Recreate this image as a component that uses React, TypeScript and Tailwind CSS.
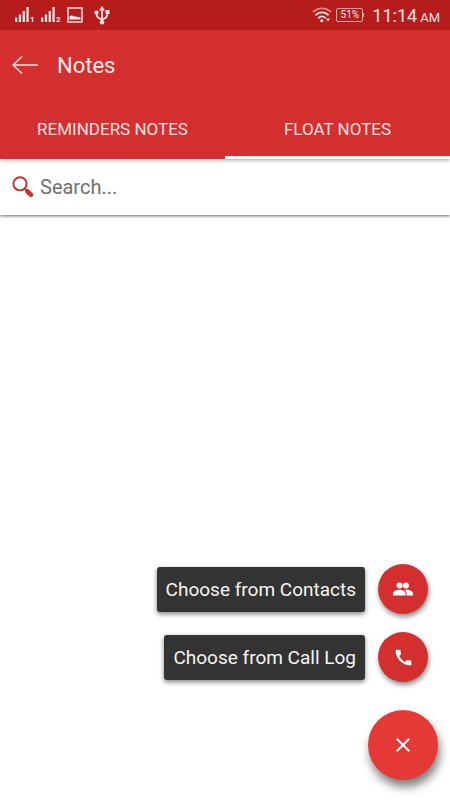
import { MdCall, MdClose } from 'react-icons/md';

const tabs = [
  { id: 'reminders', label: 'REMINDERS NOTES', active: false },
  { id: 'float', label: 'FLOAT NOTES', active: true },
];

const actions = [
  { id: 'contacts', label: 'Choose from Contacts', icon: <PeopleIcon /> },
  { id: 'calls', label: 'Choose from Call Log', icon: <MdCall size={21} /> },
];

function PeopleIcon() {
  return (
    <svg width="22" height="16" viewBox="0 0 22 16" fill="currentColor">
      <circle cx="7.5" cy="4.4" r="3" />
      <circle cx="14" cy="4.4" r="3" />
      <path d="M1 14.500v-1.800c0-2.400 3.600-3.900 6.500-3.900s6 1.500 6 3.900v1.800z" />
      <path d="M14.500 14.500h6.500v-1.800c0-2.400-3.600-3.900-6.700-3.900-.6 0-1.100 0-1.700.2 1.300.8 1.900 2.100 1.900 3.700z" />
    </svg>
  );
}

function SignalIcon({ sim }: { sim: number }) {
  return (
    <div className="flex items-end text-[#fbe3e3]">
      <svg width="15" height="16" viewBox="0 0 15 16" fill="currentColor">
        <rect x="0" y="10.500" width="2.300" height="4.500" />
        <rect x="3.800" y="7.500" width="2.300" height="7.500" />
        <rect x="7.600" y="4" width="2.300" height="11" />
        <rect x="11.400" y="0" width="2.300" height="15" />
      </svg>
      <span className="w-1 text-[8px] leading-[6px] font-bold">{sim}</span>
    </div>
  );
}

function PictureIcon() {
  return (
    <svg width="16" height="16" viewBox="0 0 16 16" fill="none">
      <rect x="1" y="1" width="14" height="14" stroke="#f9dada" strokeWidth="1.500" />
      <path d="M2.500 12.500v-3l2.500-1.200 2 1.500 1.500-.6 1.500 1.100 1.500-.6 2 1.300v1.500z" fill="#fff" />
    </svg>
  );
}

function UsbIcon() {
  return (
    <svg width="16" height="19" viewBox="0 0 16 19" fill="none" stroke="#fbe3e3" strokeWidth="1.800">
      <path d="M8 3v13M8 13.500c-4-1-5.500-2.500-5.500-6M8 13.500c4-1 5.500-2.500 5.500-6" />
      <path d="M8 0l3 4.500H5z" fill="#fbe3e3" stroke="none" />
      <circle cx="2.500" cy="6.500" r="2.100" fill="#fbe3e3" stroke="none" />
      <rect x="11.500" y="4" width="4" height="4" fill="#fbe3e3" stroke="none" />
      <circle cx="8" cy="16.300" r="2.300" fill="#fbe3e3" stroke="none" />
    </svg>
  );
}

function WifiIcon() {
  return (
    <svg width="20" height="16" viewBox="0 0 20 16" fill="none" strokeWidth="1.800" strokeLinecap="round">
      <path d="M1.500 4.500c5-4.300 12-4.300 17 0" stroke="#e38080" />
      <path d="M4 7.700c3.600-3 8.400-3 12 0M6.600 10.700c2-1.600 4.800-1.600 6.600 0" stroke="#fbe3e3" />
      <circle cx="9.800" cy="13.700" r="1.500" fill="#fbe3e3" />
      <path d="M14 11.500h4l-2 3z" fill="#fbe3e3" />
    </svg>
  );
}

function BatteryIcon() {
  return (
    <div className="flex items-center">
      <div className="flex h-[14px] w-[27px] items-center justify-center rounded-xs border border-[#f0a5a5] text-[10px] leading-none text-[#fdeaea]">
        51%
      </div>
      <div className="h-1 w-px bg-[#f0a5a5]" />
    </div>
  );
}

function BackIcon() {
  return (
    <svg width="26" height="20" viewBox="0 0 26 20" fill="none" stroke="#fbe3e3" strokeWidth="1.500">
      <path d="M10 1.500L1 10l9 8.500M1 10h25" />
    </svg>
  );
}

function SearchIcon() {
  return (
    <svg width="22" height="22" viewBox="0 0 22 22" fill="none" stroke="#c9302f">
      <circle cx="8" cy="7.800" r="6.600" strokeWidth="1.900" />
      <path d="M12.500 12.500l3 3" strokeWidth="2" />
      <path d="M15.500 15.500l3.500 3.300" strokeWidth="4.500" strokeLinecap="round" />
    </svg>
  );
}

export default function App() {
  return (
    <div className="flex min-h-screen flex-col bg-white font-[Roboto,sans-serif]">
      <header className="relative z-10 bg-[#d32f2f] shadow-[0_1px_4px_rgba(0,0,0,0.4)]">
        {/* Status bar */}
        <div className="flex h-[30px] items-center justify-between bg-[#b71c1c] pr-[10px] pl-[15px]">
          <div className="flex items-center gap-[7px]">
            <SignalIcon sim={1} />
            <SignalIcon sim={2} />
            <PictureIcon />
            <div className="pl-1">
              <UsbIcon />
            </div>
          </div>
          <div className="flex items-center text-[#fbe3e3]">
            <WifiIcon />
            <div className="pr-2 pl-1">
              <BatteryIcon />
            </div>
            <div className="flex items-baseline gap-[3px] pt-1">
              <span className="text-lg leading-5">11:14</span>
              <span className="text-[13px] leading-5">AM</span>
            </div>
          </div>
        </div>

        <div className="flex h-[70px] items-center gap-[19px] px-3">
          <button type="button" aria-label="Back">
            <BackIcon />
          </button>
          <h1 className="pt-px text-[22px] leading-7 text-[#fdeaea]">Notes</h1>
        </div>

        <div role="tablist" className="flex h-[59px]">
          {tabs.map(tab => (
            <button
              key={tab.id}
              type="button"
              role="tab"
              aria-selected={tab.active}
              className={`flex-1 border-b-3 pt-1 text-[17px] text-[#fde0e0] ${
                tab.active ? 'border-white' : 'border-transparent'
              }`}
            >
              {tab.label}
            </button>
          ))}
        </div>
      </header>

      <label className="flex h-14 items-center gap-[6px] bg-white px-3 shadow-[0_1px_3px_rgba(0,0,0,0.6)]">
        <SearchIcon />
        <input
          type="text"
          aria-label="Search notes"
          placeholder="Search..."
          className="min-w-0 flex-1 text-xl text-[#444] outline-none placeholder:text-[#707070]"
        />
      </label>

      {/* Floating action menu */}
      <div className="mt-auto flex flex-col items-end gap-[18px] pr-3 pb-5">
        {actions.map(action => (
          <div key={action.id} className="flex items-center gap-[13px] pr-[10px]">
            <label
              htmlFor={action.id}
              className="rounded-[3px] bg-[#333] px-[9px] py-2 text-[19px] leading-[29px] text-[#f5f5f5] shadow-[0_2px_5px_rgba(0,0,0,0.5)]"
            >
              {action.label}
            </label>
            <button
              id={action.id}
              type="button"
              className="flex size-[50px] items-center justify-center rounded-full bg-[#d32f2f] text-white shadow-[1px_3px_5px_rgba(0,0,0,0.45)]"
            >
              {action.icon}
            </button>
          </div>
        ))}
        <button
          type="button"
          aria-label="Close menu"
          className="mt-[10px] flex size-[70px] items-center justify-center rounded-full bg-[#e53935] text-white shadow-[2px_7px_10px_rgba(0,0,0,0.5)]"
        >
          <MdClose size={24} />
        </button>
      </div>
    </div>
  );
}
